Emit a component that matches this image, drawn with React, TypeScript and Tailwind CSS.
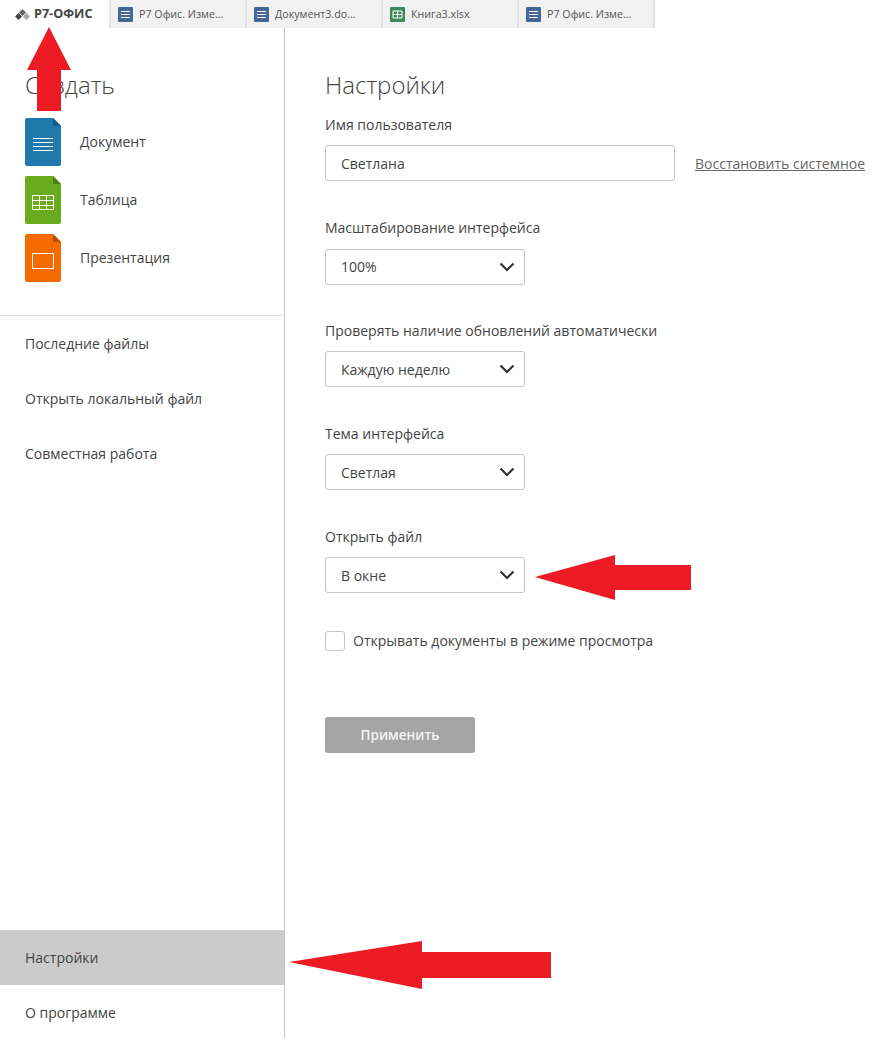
const font = { fontFamily: '"Open Sans", sans-serif' };

function TabIcon({ kind }: { kind: "doc" | "sheet" }) {
  if (kind === "sheet") {
    return (
      <svg width="15" height="15" viewBox="0 0 15 15" className="shrink-0">
        <rect width="15" height="15" rx="1" fill="#3c8a5c" />
        <path d="M3 4h9v7H3zM7.500 4v7M3 7.500h9" fill="none" stroke="#fff" strokeWidth="1" />
      </svg>
    );
  }
  return (
    <svg width="15" height="15" viewBox="0 0 15 15" className="shrink-0">
      <rect width="15" height="15" rx="1" fill="#446995" />
      <path d="M3 4.500h9M3 7.500h9M3 10.500h9" stroke="#fff" strokeWidth="1" />
    </svg>
  );
}

function Tab({ title, kind = "doc" }: { title: string; kind?: "doc" | "sheet" }) {
  return (
    <div className="flex h-full w-[136px] items-center gap-[6px] border-r-2 border-[#e2e2e2] bg-[#f1f1f1] pl-[7px] text-[10.7px] text-[#555]">
      <TabIcon kind={kind} />
      <span className="whitespace-nowrap">{title}</span>
    </div>
  );
}

function FileIcon({ color, fold, children }: { color: string; fold: string; children: React.ReactNode }) {
  return (
    <svg width="36" height="48" viewBox="0 0 36 48" className="shrink-0">
      <path d="M2 0h26l8 8v38a2 2 0 0 1-2 2H2a2 2 0 0 1-2-2V2a2 2 0 0 1 2-2z" fill={color} />
      <path d="M28 0l8 8h-8z" fill={fold} />
      {children}
    </svg>
  );
}

function CreateRow({ label, icon }: { label: string; icon: React.ReactNode }) {
  return (
    <div className="flex h-12 items-center gap-[19px]">
      {icon}
      <span className="text-sm text-[#444]">{label}</span>
    </div>
  );
}

function NavItem({ label, active, className = "" }: { label: string; active?: boolean; className?: string }) {
  return (
    <div className={`flex h-[55px] shrink-0 items-center pl-[25px] text-sm text-[#444] ${active ? "bg-[#cbcbcb]" : ""} ${className}`}>
      {label}
    </div>
  );
}

function Chevron() {
  return (
    <svg width="16" height="10" viewBox="0 0 16 10" fill="none" stroke="#333" strokeWidth="2.2">
      <path d="M1.500 1.500l6.500 6.500 6.500-6.500" />
    </svg>
  );
}

function Select({ label, value, className, labelGap, textClass = "pt-[2px]" }: { label: string; value: string; className: string; labelGap: string; textClass?: string }) {
  return (
    <div className={`flex w-[200px] flex-col ${className}`}>
      <div className={`h-[20px] whitespace-nowrap text-sm leading-[20px] text-[#444] ${labelGap}`}>{label}</div>
      <div className="flex h-9 w-[200px] items-center justify-between rounded-[3px] border border-[#c4c4c4] pl-[15px] pr-[9px] text-sm text-[#444]">
        <span className={textClass}>{value}</span>
        <Chevron />
      </div>
    </div>
  );
}

export default function App() {
  return (
    <div className="relative flex h-[1038px] w-[870px] flex-col overflow-hidden bg-white" style={font}>
      {/* tabs */}
      <div className="flex h-7 shrink-0">
        <div className="flex h-full w-[111px] items-center gap-1 border-r-2 border-[#e2e2e2] pl-[15px] text-[12.6px] font-bold text-[#444]">
          <svg width="15" height="11" viewBox="0 0 15 11" className="shrink-0">
            <path d="M7.500 0l3.500 3.500-3.500 3.500-3.500-3.500z" fill="#666" />
            <path d="M3.500 4l3.500 3.500-3.500 3.500-3.500-3.500z" fill="#444" />
            <path d="M11.500 4l3.500 3.500-3.500 3.500-3.500-3.500z" fill="#aaa" />
          </svg>
          <span className="whitespace-nowrap">Р7-ОФИС</span>
        </div>
        <Tab title="Р7 Офис. Изме..." />
        <Tab title="Документ3.do..." />
        <Tab title="Книга3.xlsx" kind="sheet" />
        <Tab title="Р7 Офис. Изме..." />
      </div>

      <div className="flex min-h-0 flex-1">
        {/* sidebar */}
        <aside className="flex w-[285px] shrink-0 flex-col border-r border-[#c9c9c9]">
          <div className="h-[288px] shrink-0 border-b border-[#dcdcdc] pl-[25px] pt-[40px]">
            <h2 className="h-[50px] text-2xl font-light leading-[34px] text-[#444]">Создать</h2>
            <div className="flex flex-col gap-[10px]">
              <CreateRow
                label="Документ"
                icon={
                  <FileIcon color="#1f79ad" fold="#155a84">
                    <path d="M8 20.500h20M8 24.500h20M8 28.500h20M8 32.500h20" stroke="#fff" strokeWidth="1" />
                  </FileIcon>
                }
              />
              <CreateRow
                label="Таблица"
                icon={
                  <FileIcon color="#6aaa1f" fold="#4b7d12">
                    <path d="M7.500 19.500h21v14h-21zM7.500 24.500h21M7.500 29.500h21M14.500 19.500v14M21.500 19.500v14" fill="none" stroke="#fff" strokeWidth="1" />
                  </FileIcon>
                }
              />
              <CreateRow
                label="Презентация"
                icon={
                  <FileIcon color="#f56b00" fold="#b34f00">
                    <rect x="7.500" y="19.500" width="21" height="15" fill="none" stroke="#fff" strokeWidth="1" />
                  </FileIcon>
                }
              />
            </div>
          </div>
          <div className="flex flex-1 flex-col">
            <NavItem label="Последние файлы" />
            <NavItem label="Открыть локальный файл" />
            <NavItem label="Совместная работа" />
          </div>
          <NavItem label="Настройки" active />
          <NavItem label="О программе" className="-mb-[2px]" />
        </aside>

        {/* settings */}
        <main className="flex-1 pl-10 pt-[40px]">
          <h1 className="h-[35px] text-2xl font-light leading-[34px] text-[#444]">Настройки</h1>
          <div className="mt-[12px] h-[20px] text-sm leading-[20px] text-[#444]">Имя пользователя</div>
          <div className="mt-[10px] flex items-center gap-5">
            <div className="flex h-9 w-[350px] items-center rounded-[3px] border border-[#c4c4c4] pl-[15px] pt-[2px] text-sm text-[#444]">
              Светлана
            </div>
            <span className="whitespace-nowrap pt-[2px] text-sm text-[#666] underline">Восстановить системное</span>
          </div>
          <div className="mt-[37px] flex flex-col">
            <Select label="Масштабирование интерфейса" value="100%" labelGap="mb-[11px]" className="mb-[36px]" textClass="" />
            <Select label="Проверять наличие обновлений автоматически" value="Каждую неделю" labelGap="mb-[10px]" className="mb-[37px]" />
            <Select label="Тема интерфейса" value="Светлая" labelGap="mb-[10px]" className="mb-[37px]" />
            <Select label="Открыть файл" value="В окне" labelGap="mb-[10px]" className="" />
          </div>
          <div className="mt-[38px] flex items-center gap-2">
            <div className="h-5 w-5 rounded-[3px] border border-[#c4c4c4]" />
            <span className="whitespace-nowrap text-sm text-[#444]">Открывать документы в режиме просмотра</span>
          </div>
          <button className="mt-[66px] flex h-9 w-[150px] items-center justify-center rounded-[3px] bg-[#a5a5a5] text-[13.5px] font-semibold text-[#f4f4f4]">
            Применить
          </button>
        </main>
      </div>

      {/* annotation arrows */}
      <svg width="870" height="1038" viewBox="0 0 870 1038" className="pointer-events-none absolute left-0 top-0">
        <g fill="#ed1c24">
          <path d="M49 27L71 70H61V111H37V70H27z" />
          <path d="M535 577L615 555V565H691V590H615V600z" />
          <path d="M289 962L422 941V952H551V978H422V989z" />
        </g>
      </svg>
    </div>
  );
}
